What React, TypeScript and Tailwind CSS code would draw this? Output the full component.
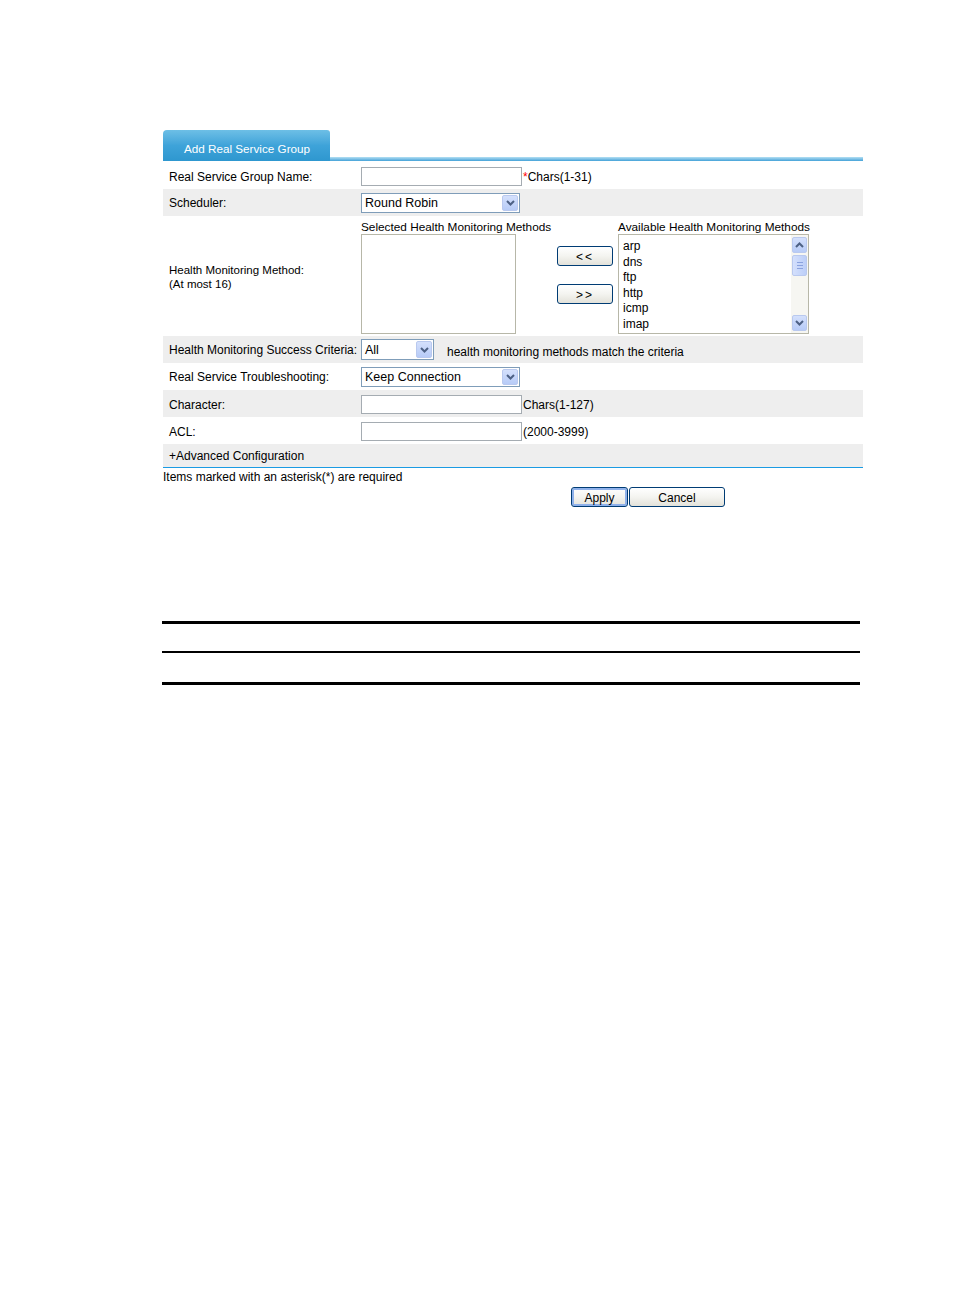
import React from "react";

const Chevron = ({ up = false }: { up?: boolean }) => (
  <svg width="9" height="6" viewBox="0 0 9 6" className="block">
    <path
      d={up ? "M1 5 L4.5 1.5 L8 5" : "M1 1 L4.5 4.5 L8 1"}
      fill="none"
      stroke="#4d6185"
      strokeWidth="2"
    />
  </svg>
);

const Select = ({ value, w, h = 20 }: { value: string; w: string; h?: number }) => (
  <div
    className={`${w} flex items-stretch border border-[#7f9db9] bg-white p-[1px]`}
    style={{ height: h }}
  >
    <div className="flex-1 pl-[2px] pt-[1px] text-[12.5px] leading-none flex items-center text-black">{value}</div>
    <div className="w-[16px] rounded-[2px] bg-gradient-to-b from-[#d4e0fc] to-[#b7cbf7] border border-[#b9c9ef] flex items-center justify-center">
      <Chevron />
    </div>
  </div>
);

const Input = ({ w = "w-[161px]", h = "h-[20px]" }: { w?: string; h?: string }) => (
  <div className={`${w} ${h} border border-[#a5acb2] bg-white`} />
);

const Row = ({
  gray,
  h,
  pt = "",
  label,
  children,
}: {
  gray?: boolean;
  h: string;
  pt?: string;
  label: React.ReactNode;
  children?: React.ReactNode;
}) => (
  <div className={`flex items-center ${h} ${pt} ${gray ? "bg-[#eeeeee]" : "bg-white"}`}>
    <div className="w-[198px] pl-[6px] shrink-0">{label}</div>
    <div className="flex items-center">{children}</div>
  </div>
);

const XpButton = ({ w, children, focus }: { w: string; children: React.ReactNode; focus?: boolean }) => (
  <div
    className={`${w} h-[20px] rounded-[3px] border border-[#003c74] bg-gradient-to-b from-white via-[#f4f4f0] to-[#e3e2da] flex items-center justify-center pt-[2px] text-[12px] text-black ${
      focus ? "shadow-[inset_0_0_0_2px_#8fb1ea]" : ""
    }`}
  >
    {children}
  </div>
);

export default function App() {
  const items = ["arp", "dns", "ftp", "http", "icmp", "imap"];
  return (
    <div
      className="w-[954px] h-[1296px] bg-white text-black text-[12px] leading-[14px]"
      style={{ fontFamily: '"Liberation Sans", Arial, sans-serif' }}
    >
      <div className="pt-[130px] pl-[163px]">
        <div className="w-[700px]">
          {/* Tab header */}
          <div className="flex items-end">
            <div className="w-[167px] h-[31px] rounded-tl-[4px] rounded-tr-[3px] bg-gradient-to-b from-[#6dbfe6] via-[#3ea3d9] to-[#2e97cf] text-white text-[11.7px] pl-[21px] pt-[12px]">
              Add Real Service Group
            </div>
            <div className="flex-1 h-[4px] bg-gradient-to-b from-[#b3e0f3] to-[#41a2d8]" />
          </div>

          <div className="h-[1px] bg-white" />

          <Row h="h-[27px]" pt="pt-[2px]" label="Real Service Group Name:">
            <Input h="h-[19px]" />
            <span className="text-[#ff0000] ml-[1px]">*</span>
            <span>Chars(1-31)</span>
          </Row>

          <Row gray h="h-[27px]" pt="pt-[1px]" label="Scheduler:">
            <Select value="Round Robin" w="w-[159px]" />
          </Row>

          {/* Health monitoring */}
          <div className="flex h-[120px] bg-white">
            <div className="w-[198px] pl-[6px] shrink-0 flex flex-col justify-center pt-[1px]">
              <div className="text-[11.5px]">Health Monitoring Method:</div>
              <div className="text-[11.5px]">(At most 16)</div>
            </div>
            <div className="flex pt-[4px]">
              <div className="w-[155px] flex flex-col">
                <div className="h-[13px] leading-[15px] text-[11.8px] whitespace-nowrap">Selected Health Monitoring Methods</div>
                <div className="mt-[1px] h-[100px] border border-[#b7b7a8]" />
              </div>
              <div className="ml-[41px] w-[56px] pt-[26px] flex flex-col gap-[18px]">
                <XpButton w="w-[56px]">
                  <span className="tracking-[2px]">&lt;&lt;</span>
                </XpButton>
                <XpButton w="w-[56px]">
                  <span className="tracking-[2px]">&gt;&gt;</span>
                </XpButton>
              </div>
              <div className="ml-[5px] w-[191px] flex flex-col">
                <div className="h-[13px] leading-[15px] text-[11.8px] whitespace-nowrap">Available Health Monitoring Methods</div>
                <div className="mt-[1px] h-[100px] border border-[#b7b7a8] flex">
                  <div className="flex-1 pl-[4px] pt-[4px] text-[12px] leading-[15.6px]">
                    {items.map((i) => (
                      <div key={i}>{i}</div>
                    ))}
                  </div>
                  <div className="w-[17px] bg-[#f6f6f2] flex flex-col items-center py-[2px]">
                    <div className="w-[15px] h-[16px] rounded-[2px] bg-gradient-to-b from-[#d4e0fc] to-[#b7cbf7] border border-[#b9c9ef] flex items-center justify-center">
                      <Chevron up />
                    </div>
                    <div className="mt-[2px] w-[15px] h-[21px] rounded-[2px] bg-gradient-to-r from-[#d4e0fc] to-[#bccef8] border border-[#b9c9ef] flex flex-col items-center justify-center gap-[2px]">
                      <div className="w-[6px] h-[1px] bg-[#8aa2de]" />
                      <div className="w-[6px] h-[1px] bg-[#8aa2de]" />
                      <div className="w-[6px] h-[1px] bg-[#8aa2de]" />
                    </div>
                    <div className="flex-1" />
                    <div className="w-[15px] h-[16px] rounded-[2px] bg-gradient-to-b from-[#d4e0fc] to-[#b7cbf7] border border-[#b9c9ef] flex items-center justify-center">
                      <Chevron />
                    </div>
                  </div>
                </div>
              </div>
            </div>
          </div>

          <Row gray h="h-[27px]" label={<span className="whitespace-nowrap">Health Monitoring Success Criteria:</span>}>
            <Select value="All" w="w-[73px]" h={21} />
            <span className="ml-[13px] mt-[4px]">health monitoring methods match the criteria</span>
          </Row>

          <Row h="h-[27px]" pt="pt-[1px]" label="Real Service Troubleshooting:">
            <Select value="Keep Connection" w="w-[159px]" />
          </Row>

          <Row gray h="h-[27px]" pt="pt-[2px]" label="Character:">
            <Input h="h-[19px]" />
            <span className="ml-[1px]">Chars(1-127)</span>
          </Row>

          <Row h="h-[27px]" pt="pt-[2px]" label="ACL:">
            <Input h="h-[19px]" />
            <span className="ml-[1px]">(2000-3999)</span>
          </Row>

          <Row gray h="h-[23px]" label="+Advanced Configuration" />

          <div className="h-[1px] bg-[#1a9be3]" />

          <div className="h-[15px] leading-[15px] pt-[2px]">Items marked with an asterisk(*) are required</div>

          <div className="mt-[4px] pl-[408px] flex gap-[1px]">
            <XpButton w="w-[57px]" focus>
              Apply
            </XpButton>
            <XpButton w="w-[96px]">Cancel</XpButton>
          </div>
        </div>
      </div>

      {/* Table rules */}
      <div className="pl-[162px] pt-[114px]">
        <div className="w-[698px] h-[3px] bg-black" />
        <div className="w-[698px] h-[2px] bg-black mt-[27px]" />
        <div className="w-[698px] h-[3px] bg-black mt-[29px]" />
      </div>
    </div>
  );
}
